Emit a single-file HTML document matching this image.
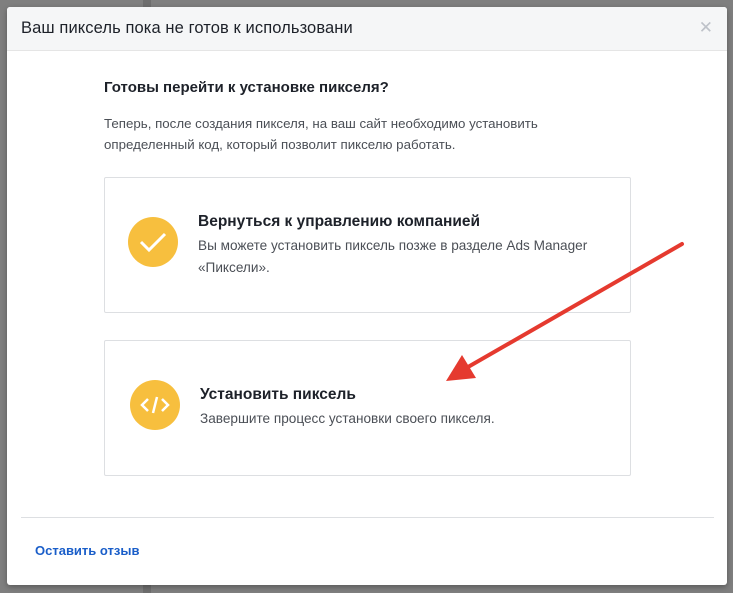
<!DOCTYPE html>
<html><head><meta charset="utf-8"><style>
body{margin:0;width:733px;height:593px;background:#7f7f7f;position:relative;overflow:hidden;font-family:"Liberation Sans",Arial,sans-serif}
.strip{position:absolute;left:143px;top:0;width:8px;height:593px;background:#6e6e6e}
.modal{position:absolute;left:7px;top:7px;width:720px;height:578px;background:#fff;border-radius:3px;box-shadow:0 2px 6px rgba(0,0,0,.3);overflow:hidden}
.hd{height:43px;background:#f5f6f7;border-bottom:1px solid #e5e5e5;position:relative}
.hd span{position:absolute;left:14px;top:12px;font-size:16.5px;color:#1d2129;letter-spacing:0.1px}
.x{position:absolute;right:14px;top:11px;color:#bec2c9;font-size:17px}
.t{position:absolute;left:97px;top:72px;font-size:15px;font-weight:bold;color:#1d2129}
.p{position:absolute;left:97px;top:106px;font-size:13.3px;color:#4b4f56;line-height:21px}
.card{position:absolute;left:97px;width:525px;border:1px solid #dddfe2;border-radius:2px}
.ic{position:absolute;width:50px;height:50px;border-radius:50%;background:#f7bf3e}
.ct{position:absolute;font-size:15.5px;font-weight:bold;color:#1d2129}
.cd{position:absolute;font-size:13.6px;color:#4b4f56;line-height:22px}
.sep{position:absolute;left:14px;right:13px;top:510px;border-top:1px solid #dddfe2}
.lnk{position:absolute;left:28px;top:536px;font-size:13px;font-weight:bold;color:#1a5ec9}
</style></head><body>
<div class="strip"></div>
<div class="modal">
<div class="hd"><span>Ваш пиксель пока не готов к использовани</span><div class="x">✕</div></div>
<div class="t">Готовы перейти к установке пикселя?</div>
<div class="p">Теперь, после создания пикселя, на ваш сайт необходимо установить<br>определенный код, который позволит пикселю работать.</div>
<div class="card" style="top:170px;height:134px">
<div class="ic" style="left:23px;top:39px"><svg width="50" height="50"><path d="M13 25 L21 33 L37 17" stroke="#fff" stroke-width="3" fill="none"/></svg></div>
<div class="ct" style="left:93px;top:35px">Вернуться к управлению компанией</div>
<div class="cd" style="left:93px;top:57px">Вы можете установить пиксель позже в разделе Ads Manager<br>«Пиксели».</div>
</div>
<div class="card" style="top:333px;height:134px">
<div class="ic" style="left:25px;top:39px"><svg width="50" height="50"><path d="M18 19 L12 25 L18 31 M32 19 L38 25 L32 31 M27 17 L23 33" stroke="#fff" stroke-width="2.5" fill="none"/></svg></div>
<div class="ct" style="left:95px;top:45px">Установить пиксель</div>
<div class="cd" style="left:95px;top:67px">Завершите процесс установки своего пикселя.</div>
</div>
<div class="sep"></div>
<div class="lnk">Оставить отзыв</div>
</div>
<svg style="position:absolute;left:0;top:0" width="733" height="593"><line x1="682" y1="244" x2="468" y2="367" stroke="#e53a2f" stroke-width="4" stroke-linecap="round"/><polygon points="446,381 462,355 476,378" fill="#e53a2f"/></svg>
</body></html>
